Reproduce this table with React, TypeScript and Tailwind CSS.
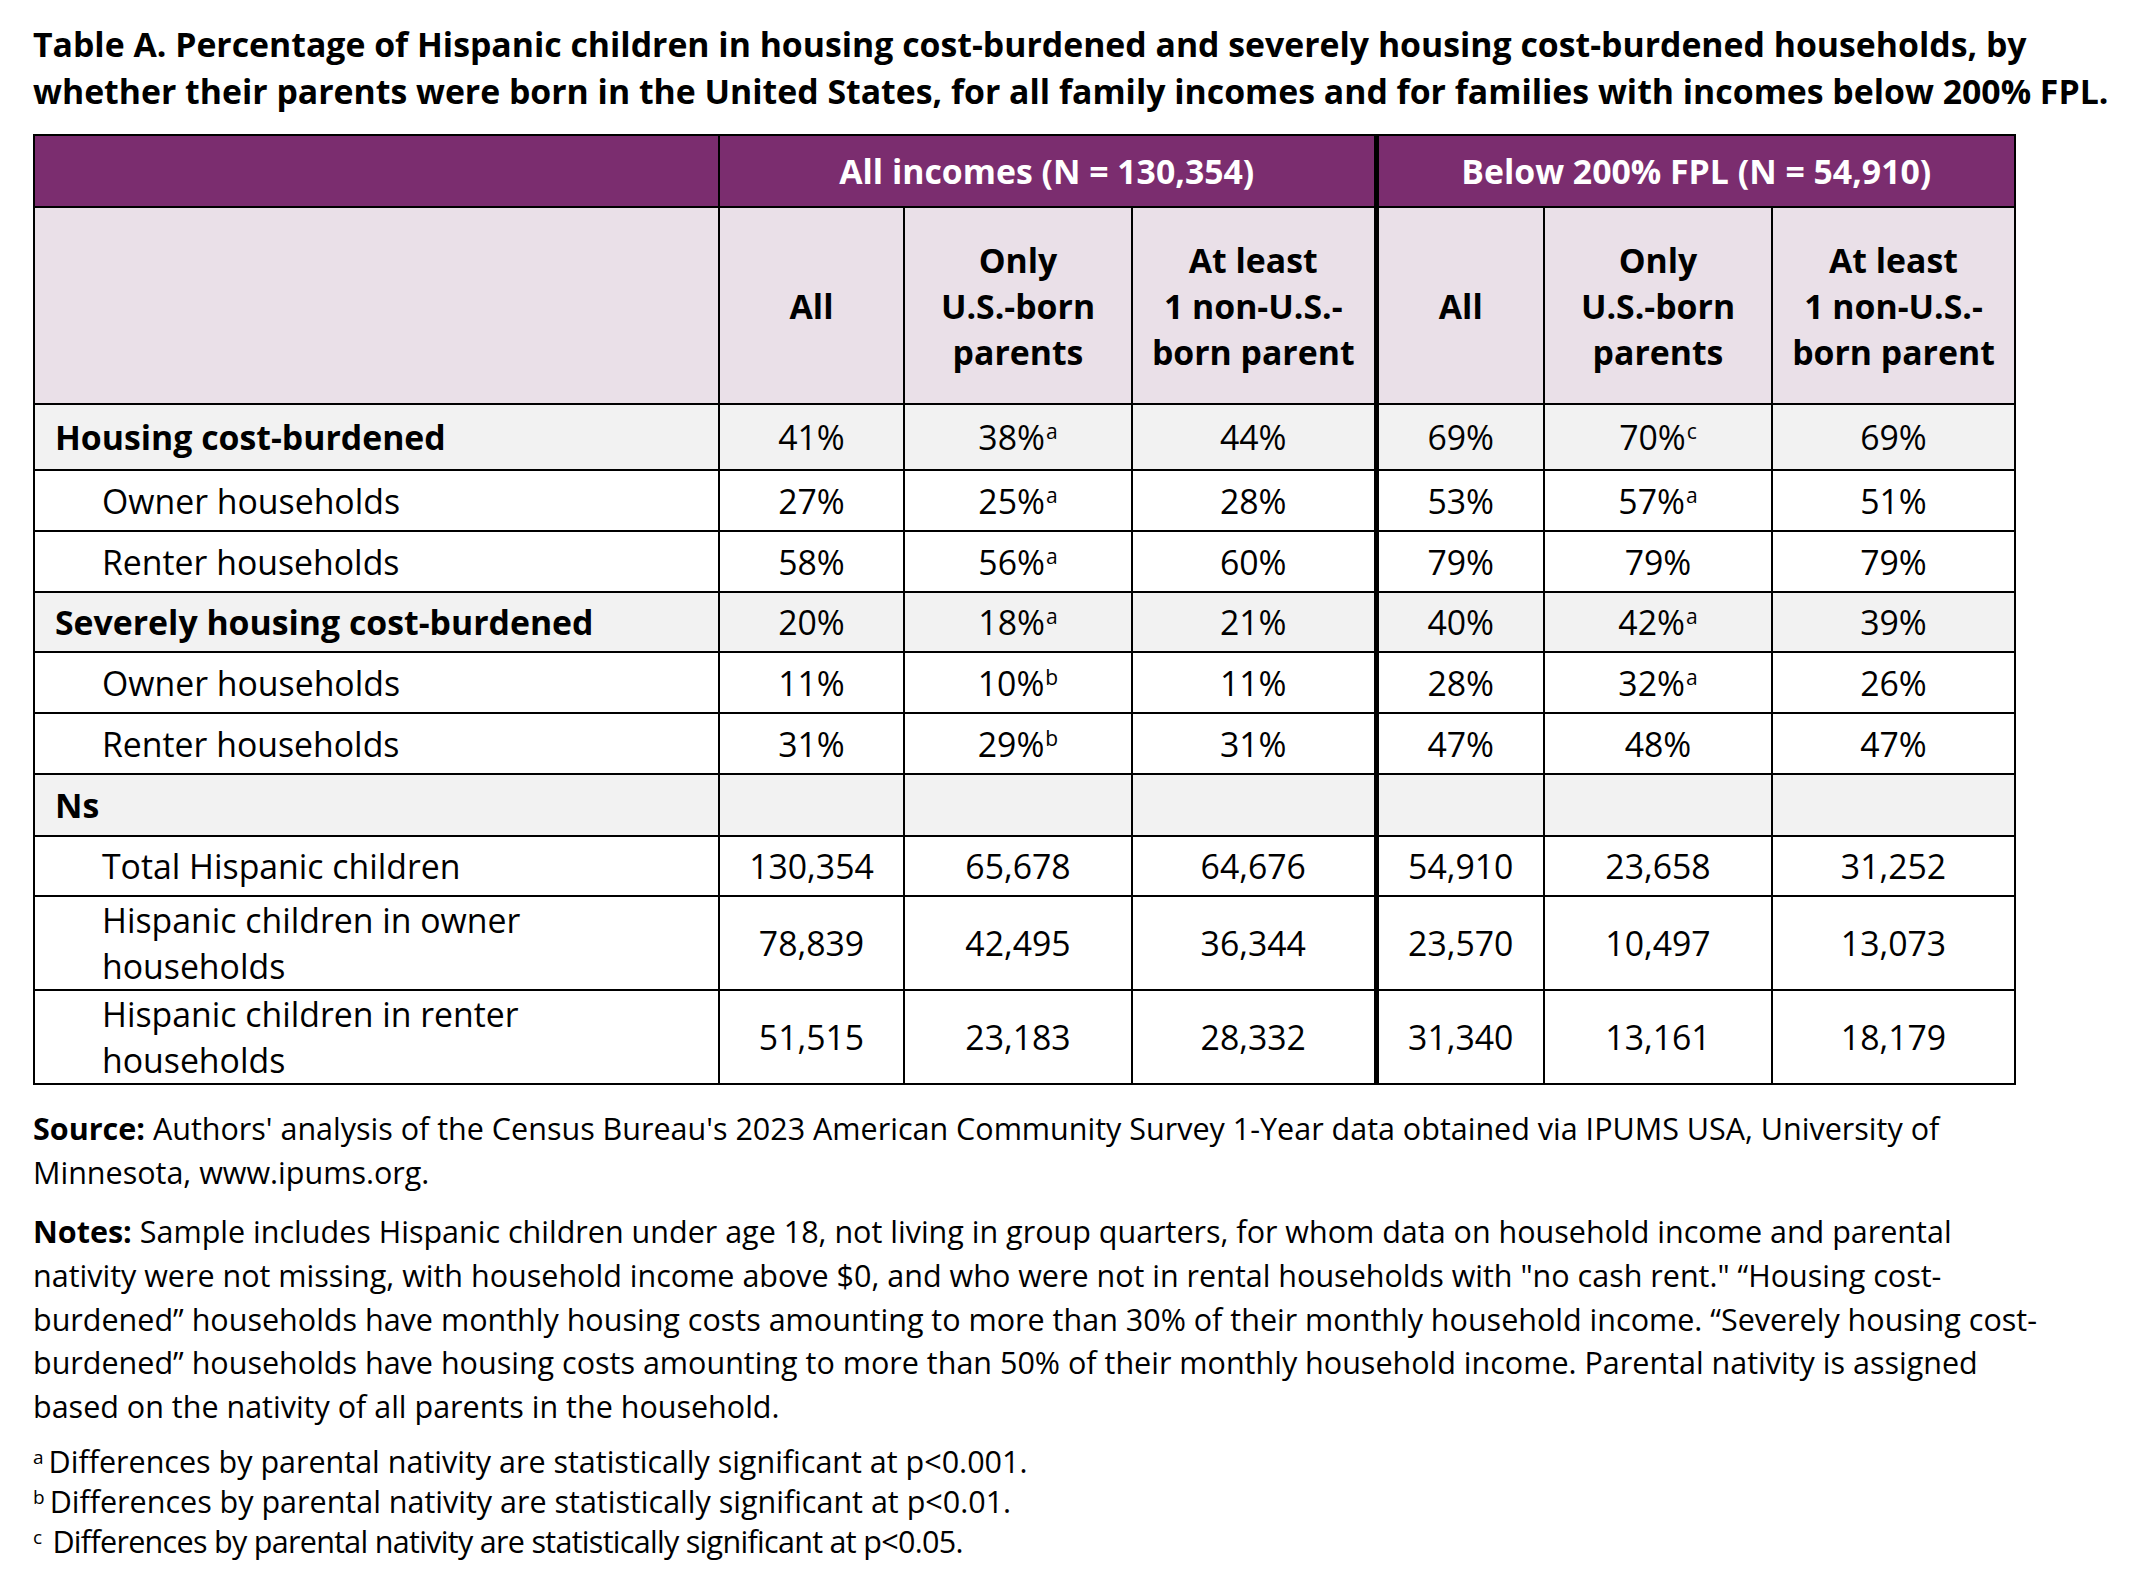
import React from "react";

type Cell = { v: string; sup?: string };
type Row = { label: string[]; bold?: boolean; cells: Cell[]; h: string };

const c = (v: string, sup?: string): Cell => ({ v, sup });

const rows: Row[] = [
  { label: ["Housing cost-burdened"], bold: true, h: "h-[66px]", cells: [c("41%"), c("38%", "a"), c("44%"), c("69%"), c("70%", "c"), c("69%")] },
  { label: ["Owner households"], h: "h-[61px]", cells: [c("27%"), c("25%", "a"), c("28%"), c("53%"), c("57%", "a"), c("51%")] },
  { label: ["Renter households"], h: "h-[61px]", cells: [c("58%"), c("56%", "a"), c("60%"), c("79%"), c("79%"), c("79%")] },
  { label: ["Severely housing cost-burdened"], bold: true, h: "h-[60px]", cells: [c("20%"), c("18%", "a"), c("21%"), c("40%"), c("42%", "a"), c("39%")] },
  { label: ["Owner households"], h: "h-[61px]", cells: [c("11%"), c("10%", "b"), c("11%"), c("28%"), c("32%", "a"), c("26%")] },
  { label: ["Renter households"], h: "h-[61px]", cells: [c("31%"), c("29%", "b"), c("31%"), c("47%"), c("48%"), c("47%")] },
  { label: ["Ns"], bold: true, h: "h-[62px]", cells: [c(""), c(""), c(""), c(""), c(""), c("")] },
  { label: ["Total Hispanic children"], h: "h-[60px]", cells: [c("130,354"), c("65,678"), c("64,676"), c("54,910"), c("23,658"), c("31,252")] },
  { label: ["Hispanic children in owner", "households"], h: "h-[94px]", cells: [c("78,839"), c("42,495"), c("36,344"), c("23,570"), c("10,497"), c("13,073")] },
  { label: ["Hispanic children in renter", "households"], h: "h-[94px]", cells: [c("51,515"), c("23,183"), c("28,332"), c("31,340"), c("13,161"), c("18,179")] },
];

const subHeads = [["All"], ["Only", "U.S.-born", "parents"], ["At least", "1 non-U.S.-", "born parent"]];

// superscript letter next to a percentage
function Sup({ s }: { s: string }) {
  return <sup className="relative -top-[11px] ml-[1px] text-[21px] leading-none">{s}</sup>;
}

function FootSup({ s }: { s: string }) {
  return <sup className="relative -top-[9px] mr-[5px] text-[19px] leading-none">{s}</sup>;
}

export default function App() {
  return (
    <div className="min-h-[1594px] w-[2156px] bg-white font-['Open_Sans',sans-serif] text-black">
      <div className="px-[33px] pt-[21px]">
        <h1 className="whitespace-nowrap text-[33.8px] font-bold leading-[46.7px]">
          Table A. Percentage of Hispanic children in housing cost-burdened and severely housing cost-burdened households, by
          <br />
          whether their parents were born in the United States, for all family incomes and for families with incomes below 200% FPL.
        </h1>

        <table className="mt-[20px] w-[1981px] table-fixed border-collapse border-2 border-black text-[33.8px] leading-[46px]">
          <colgroup>
            <col className="w-[685px]" />
            <col className="w-[185px]" />
            <col className="w-[228px]" />
            <col className="w-[244px]" />
            <col className="w-[168px]" />
            <col className="w-[228px]" />
            <col className="w-[243px]" />
          </colgroup>
          <thead>
            <tr className="h-[72px] bg-[#7b2d6f] font-bold text-white">
              <th className="border-2 border-black" />
              <th colSpan={3} className="border-2 border-black text-center font-bold">
                All incomes (N = 130,354)
              </th>
              <th colSpan={3} className="border-2 border-l-[5px] border-black text-center font-bold">
                Below 200% FPL (N = 54,910)
              </th>
            </tr>
            <tr className="h-[197px] bg-[#eae0e8]">
              <th className="border-2 border-black" />
              {[0, 1].map((g) =>
                subHeads.map((lines, i) => (
                  <th
                    key={`${g}-${i}`}
                    className={`border-2 border-black text-center font-bold ${g === 1 && i === 0 ? "border-l-[5px]" : ""}`}
                  >
                    {lines.map((l) => (
                      <div key={l} className="whitespace-nowrap">
                        {l}
                      </div>
                    ))}
                  </th>
                ))
              )}
            </tr>
          </thead>
          <tbody>
            {rows.map((r, ri) => (
              <tr key={ri} className={`${r.h} ${r.bold ? "bg-[#f2f2f2]" : "bg-white"}`}>
                <td className={`border-2 border-black ${r.bold ? "pl-[20px] font-bold" : "pl-[67px]"}`}>
                  {r.label.map((l) => (
                    <div key={l} className="whitespace-nowrap">
                      {l}
                    </div>
                  ))}
                </td>
                {r.cells.map((cell, ci) => (
                  <td
                    key={ci}
                    className={`border-2 border-black text-center whitespace-nowrap ${ci === 3 ? "border-l-[5px]" : ""}`}
                  >
                    {cell.v}
                    {cell.sup && <Sup s={cell.sup} />}
                  </td>
                ))}
              </tr>
            ))}
          </tbody>
        </table>

        <div className="mt-[21px] whitespace-nowrap text-[30.5px] leading-[44px]">
          <p>
            <span className="font-bold">Source:</span> Authors' analysis of the Census Bureau's 2023 American Community Survey 1-Year data obtained via IPUMS USA, University of
            <br />
            Minnesota, www.ipums.org.
          </p>
          <p className="mt-[16px] leading-[43.6px]">
            <span className="font-bold">Notes:</span> Sample includes Hispanic children under age 18, not living in group quarters, for whom data on household income and parental
            <br />
            nativity were not missing, with household income above $0, and who were not in rental households with "no cash rent." “Housing cost-
            <br />
            burdened” households have monthly housing costs amounting to more than 30% of their monthly household income. “Severely housing cost-
            <br />
            burdened” households have housing costs amounting to more than 50% of their monthly household income. Parental nativity is assigned
            <br />
            based on the nativity of all parents in the household.
          </p>
          <div className="mt-[13px] leading-[40px]">
            <p>
              <FootSup s="a" />
              Differences by parental nativity are statistically significant at p&lt;0.001.
            </p>
            <p>
              <FootSup s="b" />
              Differences by parental nativity are statistically significant at p&lt;0.01.
            </p>
            <p className="tracking-[-0.7px]">
              <FootSup s="c" />
              <span className="ml-[6px]">Differences by parental nativity are statistically significant at p&lt;0.05.</span>
            </p>
          </div>
        </div>
      </div>
    </div>
  );
}
